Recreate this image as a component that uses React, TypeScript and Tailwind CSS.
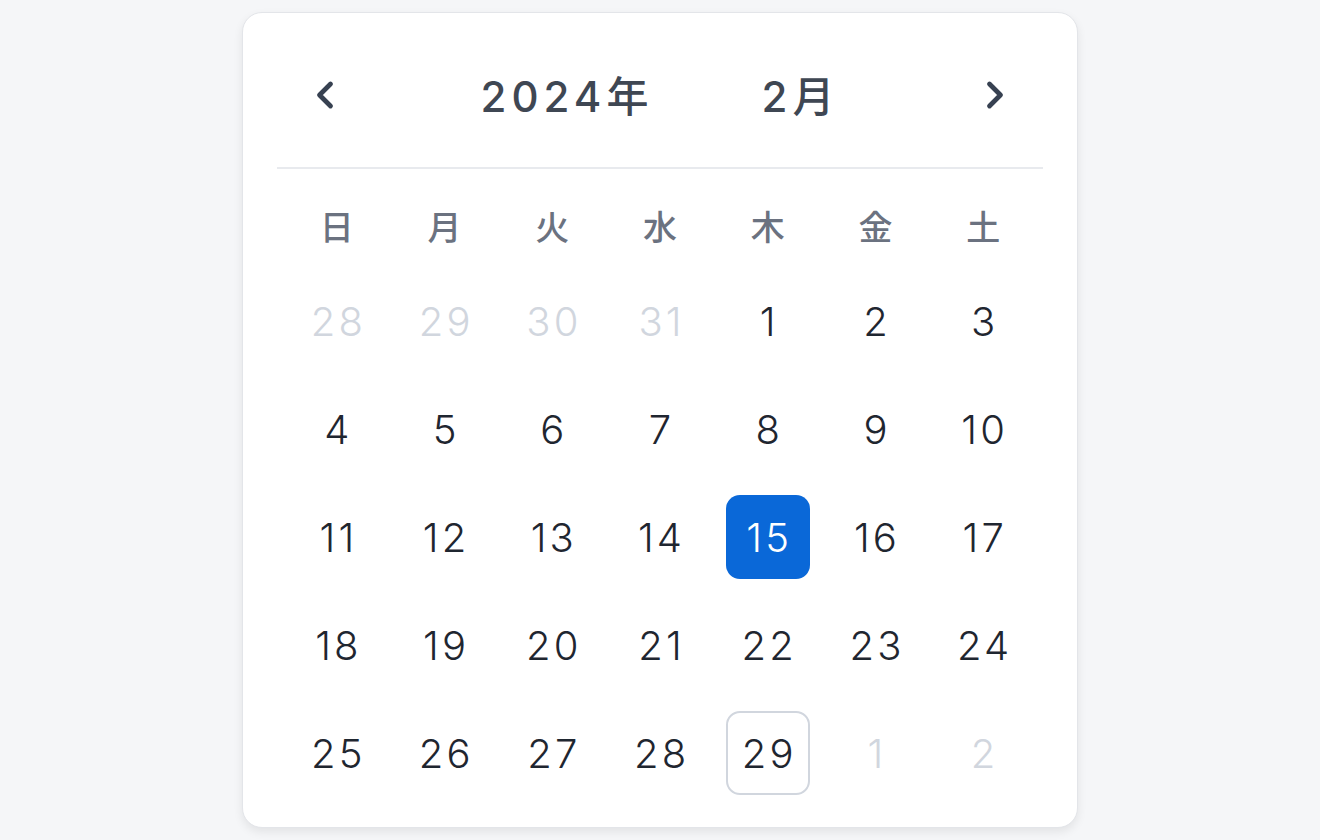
import React from 'react';
import { ChevronLeft, ChevronRight } from 'lucide-react';

type Day = { d: number; muted?: boolean };

const weekdays = ['日', '月', '火', '水', '木', '金', '土'];

function buildDays(): Day[] {
    const days: Day[] = [28, 29, 30, 31].map(d => ({ d, muted: true }));
    for (let i = 1; i <= 29; i++) days.push({ d: i });
    days.push({ d: 1, muted: true }, { d: 2, muted: true });
    return days;
}

export default function App() {
    const days = buildDays();
    const selected = 15;
    const today = 29;

    return (
        <div
            className="min-h-[840px] bg-[#f5f6f8] flex items-center justify-center"
            style={{ fontFamily: 'Inter, "Noto Sans CJK JP", sans-serif' }}
        >
            <div className="w-[836px] bg-white rounded-[20px] border border-[#e3e5e9] shadow-[0_4px_10px_rgba(0,0,0,0.08)] px-[34px] pt-[34px] pb-[20px]">
                {/* header */}
                <div className="flex items-center h-[96px]">
                    <button type="button" className="w-[96px] h-[96px] flex items-center justify-center text-[#374151]">
                        <ChevronLeft size={44} strokeWidth={2.6} />
                    </button>
                    <div className="flex-1 flex items-center justify-center gap-[108px] text-[42px] font-medium text-[#3f4753] tracking-[0.12em] pt-[2px]">
                        <span>2024年</span>
                        <span>2月</span>
                    </div>
                    <button type="button" className="w-[96px] h-[96px] flex items-center justify-center text-[#374151]">
                        <ChevronRight size={44} strokeWidth={2.6} />
                    </button>
                </div>

                <div className="mt-[24px] h-[2px] bg-[#e8eaee]" />

                <div className="px-[6px]">
                    {/* weekdays */}
                    <div className="grid grid-cols-7 mt-[30px] h-[56px] items-center">
                        {weekdays.map(w => (
                            <div key={w} className="text-center text-[34px] font-medium text-[#6b7280]">{w}</div>
                        ))}
                    </div>

                    {/* days */}
                    <div className="grid grid-cols-7 mt-[12px]">
                        {days.map((day, i) => {
                            const isSel = !day.muted && day.d === selected;
                            const isToday = !day.muted && day.d === today;
                            return (
                                <div key={i} className="h-[108px] flex items-center justify-center">
                                    <div
                                        className={
                                            isSel
                                                ? 'w-[84px] h-[84px] rounded-[14px] bg-[#0a68d8] text-white flex items-center justify-center text-[40px] font-[350] tracking-[0.08em]'
                                                : isToday
                                                ? 'w-[84px] h-[84px] rounded-[14px] border-2 border-[#d1d6de] text-[#1f2630] flex items-center justify-center text-[40px] font-[350] tracking-[0.08em]'
                                                : day.muted
                                                ? 'w-[84px] h-[84px] flex items-center justify-center text-[40px] font-[350] text-[#d1d6de] tracking-[0.08em]'
                                                : 'w-[84px] h-[84px] flex items-center justify-center text-[40px] font-[350] text-[#1f2630] tracking-[0.08em]'
                                        }
                                    >
                                        <span className="pl-[0.08em] pt-[2px]">{day.d}</span>
                                    </div>
                                </div>
                            );
                        })}
                    </div>
                </div>
            </div>
        </div>
    );
}
